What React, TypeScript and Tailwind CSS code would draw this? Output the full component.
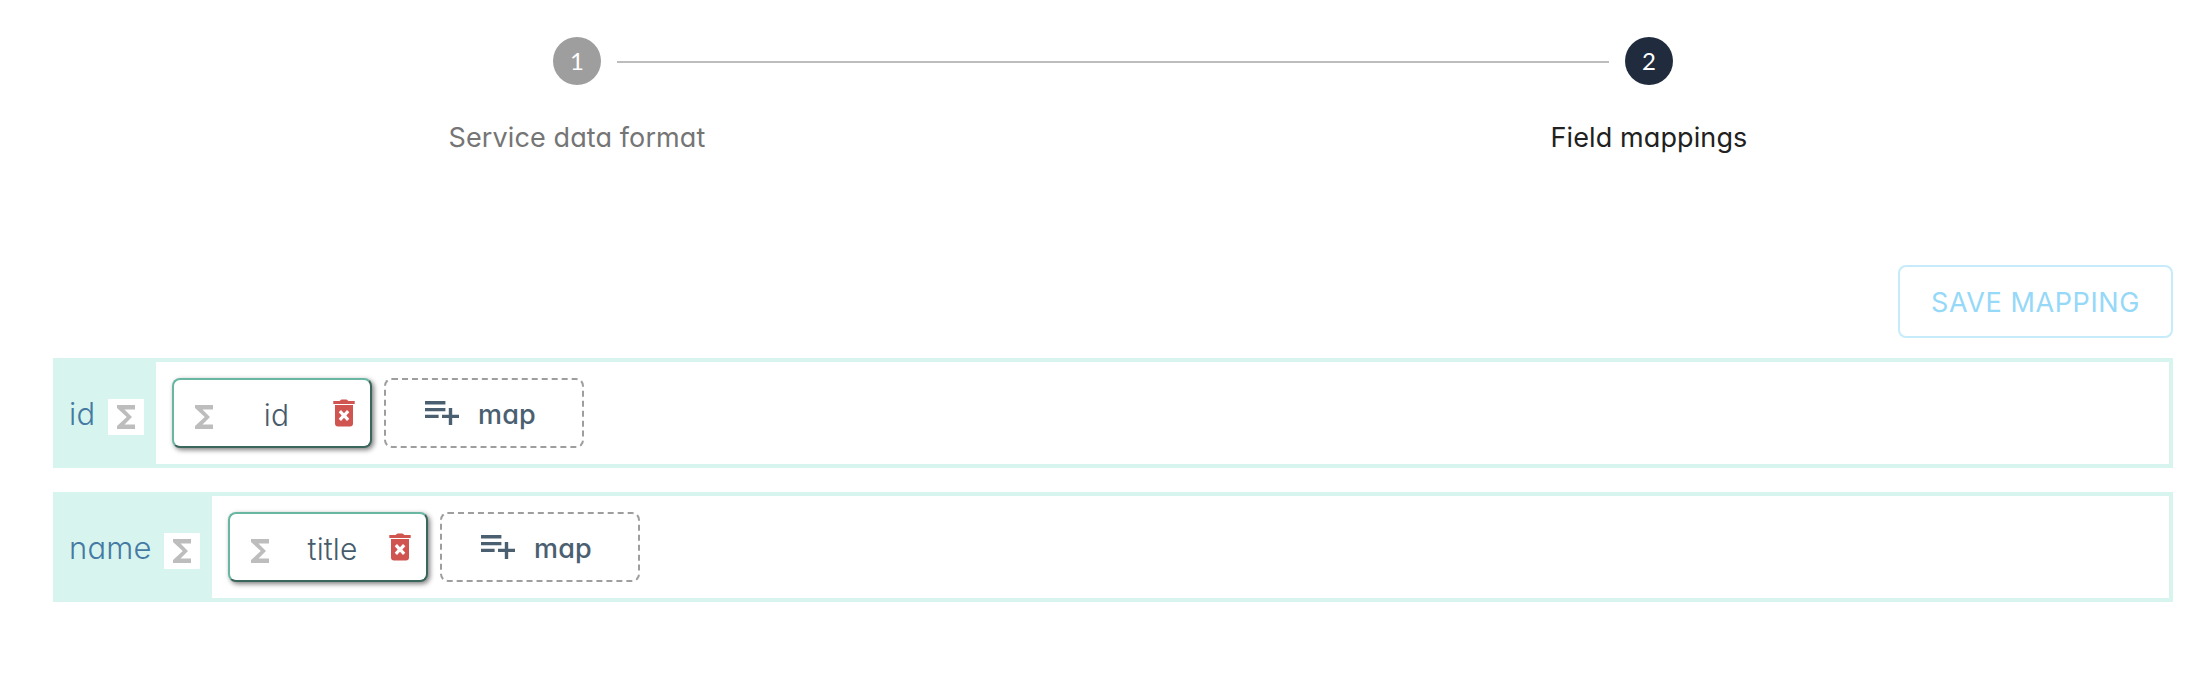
import React from "react";

const SANS = "font-[Inter,'Noto_Sans',sans-serif] [font-feature-settings:'cv11']";

function Sigma() {
  return (
    <svg viewBox="0 0 24 24" className="block size-9 shrink-0 fill-[#bdbdbd]">
      <path d="M18 4H6v2l6.5 6L6 18v2h12v-3h-7l5-5-5-5h7z" />
    </svg>
  );
}

function Trash() {
  return (
    <svg viewBox="0 0 22 28" className="block h-7 w-[22px] shrink-0 fill-[#d05551]">
      <path d="M6.500 2 8.500.5h5L15.500 2h6.200v3H.3V2z" />
      <path
        fillRule="evenodd"
        d="M2 6h18v18.5a3 3 0 0 1-3 3H5a3 3 0 0 1-3-3zM8 11 5.700 13.300l3 3.200-3 3.200L8 22l3-3.200 3 3.200 2.300-2.300-3-3.200 3-3.200L14 11l-3 3.200z"
      />
    </svg>
  );
}

function ListPlus() {
  return (
    <svg viewBox="2 6 20 14" className="block h-6 w-[34px] shrink-0 fill-[#4a6070]">
      <path d="M14 10H2v2h12v-2zm0-4H2v2h12V6zm4 8v-4h-2v4h-4v2h4v4h2v-4h4v-2h-4zM2 16h8v-2H2v2z" />
    </svg>
  );
}

interface StepProps {
  n: number;
  label: string;
  active?: boolean;
}

function Step({ n, label, active }: StepProps) {
  return (
    <div className="flex w-12 flex-col items-center">
      <div
        className={`flex size-12 items-center justify-center rounded-full pb-px font-[Lato,sans-serif] text-[24px] leading-none text-white ${
          active ? "bg-[#202c3e]" : "bg-[#9e9e9e]"
        }`}
      >
        {n}
      </div>
      <div
        className={`mt-[33px] text-[27px] leading-10 tracking-[0.1px] whitespace-nowrap ${
          active ? "text-[#212121]" : "text-[#757575]"
        }`}
      >
        {label}
      </div>
    </div>
  );
}

interface RowProps {
  field: string;
  source: string;
  labelWidth: string;
}

function MappingRow({ field, source, labelWidth }: RowProps) {
  return (
    <div className="flex h-[110px] border-4 border-[#d8f4ee]">
      <div className={`flex shrink-0 items-center justify-between bg-[#d8f4ee] px-3 ${labelWidth}`}>
        <span className="text-[31px] leading-none font-[350] tracking-[0.2px] text-[#457aa3]">{field}</span>
        <span className="mt-2 bg-white">
          <Sigma />
        </span>
      </div>
      <div className="flex gap-3 p-4">
        <div className="flex h-[70px] w-[200px] items-center rounded-lg border-2 border-t-[#69b7a3] border-r-[#3a665b] border-b-[#3a665b] border-l-[#69b7a3] bg-white pr-[15px] pl-3 shadow-[2px_2px_5px_rgba(0,0,0,0.5)]">
          <span className="mt-2">
            <Sigma />
          </span>
          <span className="flex-1 pt-1 pr-[2px] text-center text-[30px] leading-none font-[350] tracking-[0.1px] text-[#465b6b]">
            {source}
          </span>
          <Trash />
        </div>
        <div className="flex h-[70px] w-[200px] items-center rounded-lg border-2 border-dashed border-[#9e9e9e] pl-[39px]">
          <ListPlus />
          <span className="ml-[19px] pt-[3px] text-[27px] leading-none font-medium tracking-[0.2px] text-[#4a6070]">map</span>
        </div>
      </div>
    </div>
  );
}

export default function App() {
  return (
    <main className={`h-[682px] w-[2212px] overflow-hidden bg-white ${SANS}`}>
      <header className="flex h-[265px] items-start gap-4 pt-[37px] pl-[553px]">
        <Step n={1} label="Service data format" />
        <div className="mt-6 h-0.5 w-[992px] bg-[#bdbdbd]" />
        <Step n={2} label="Field mappings" active />
      </header>
      <section className="flex flex-col pr-[39px] pl-[53px]">
        <button className="mb-5 flex h-[73px] w-[275px] items-center justify-center self-end rounded-lg border-2 border-[#c6ecfb] pt-px text-[27px] leading-none tracking-[0.6px] text-[#95d8f8]">
          SAVE MAPPING
        </button>
        <div className="flex flex-col gap-6">
          <MappingRow field="id" source="id" labelWidth="w-[99px]" />
          <MappingRow field="name" source="title" labelWidth="w-[155px]" />
        </div>
      </section>
    </main>
  );
}
